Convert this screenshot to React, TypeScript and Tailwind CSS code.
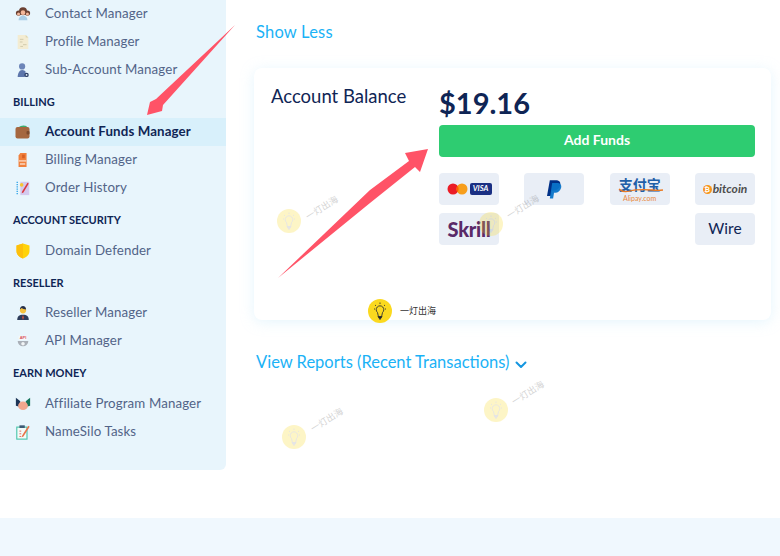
import React from "react";

function ContactIcon() {
  return (
    <svg width="16" height="16" viewBox="0 0 18 18">
      <circle cx="4" cy="8" r="3" fill="#6b4032" />
      <circle cx="14" cy="8" r="3" fill="#6b4032" />
      <circle cx="9" cy="6" r="4.500" fill="#6b4032" />
      <circle cx="9" cy="7.500" r="2.600" fill="#f3b79a" />
      <circle cx="4" cy="9" r="1.700" fill="#f3b79a" />
      <circle cx="14" cy="9" r="1.700" fill="#f3b79a" />
      <path d="M4 16c0-3 2-5 5-5s5 2 5 5z" fill="#a9cde6" />
    </svg>
  );
}
function ProfileIcon() {
  return (
    <svg width="16" height="16" viewBox="0 0 18 18">
      <path d="M3 1h9l3 3v13H3z" fill="#f3ecd2" />
      <path d="M12 1l3 3h-3z" fill="#ddd5b0" />
      <path d="M5.500 6h4M5.500 9h3M9 12h4M6 14h3" stroke="#cfc8a8" strokeWidth="1" />
    </svg>
  );
}
function SubIcon() {
  return (
    <svg width="16" height="16" viewBox="0 0 18 18">
      <circle cx="8" cy="5" r="3.500" fill="#6c85b8" />
      <path d="M3 17c0-4 2-8 5-8 2 0 3 1 4 2l-1 6z" fill="#5d76ab" />
      <circle cx="13" cy="14.500" r="2.500" fill="#2c3e66" />
      <circle cx="13" cy="14.500" r="1" fill="#e8f5fc" />
    </svg>
  );
}
function WalletIcon() {
  return (
    <svg width="15" height="14" viewBox="0 0 15 14">
      <path d="M3 2.500Q7 -.5 11.500 1L12 3H3z" fill="#3cae6f" />
      <rect x="0.500" y="2" width="14" height="11.500" rx="2" fill="#a5673f" />
      <rect x="11.500" y="6" width="3" height="3.500" rx="1" fill="#7b4a2c" />
    </svg>
  );
}
function BillingIcon() {
  return (
    <svg width="16" height="16" viewBox="0 0 18 18">
      <path d="M4 4l2-3h7v16H4z" fill="#f0803c" />
      <path d="M8 3h3v4H8z" fill="#d95e22" />
      <path d="M4 9h9v2H4z" fill="#f9c2a0" />
      <path d="M5.500 13.500h6" stroke="#fbe2d2" strokeWidth="1.500" />
    </svg>
  );
}
function OrderIcon() {
  return (
    <svg width="16" height="16" viewBox="0 0 18 18">
      <rect x="6" y="2" width="10" height="15" fill="#d3c9ee" />
      <path d="M2.500 2v15" stroke="#2ea3e8" strokeWidth="1.500" strokeDasharray="1.500 1" />
      <circle cx="7.500" cy="5.500" r="2" fill="#f7c531" />
      <path d="M8 13l6-10 1.500 1-6 10-2 1z" fill="#d9363e" />
    </svg>
  );
}
function ShieldIcon() {
  return (
    <svg width="16" height="16" viewBox="0 0 16 16">
      <path d="M8 0.500l6.500 2v5.500c0 3.500-3 6.500-6.500 7.500-3.500-1-6.500-4-6.500-7.500V2.500z" fill="#ffd30a" />
      <path d="M8 0.500L1.500 2.500v5.500c0 3.500 3 6.500 6.500 7.500z" fill="#fdbf0c" />
    </svg>
  );
}
function ResellerIcon() {
  return (
    <svg width="16" height="16" viewBox="0 0 18 18">
      <path d="M2.500 17c0-4 2-6 6.500-6s6.500 2 6.500 6z" fill="#2d3c5a" />
      <circle cx="9" cy="6" r="3.500" fill="#f6c23e" />
      <path d="M5.500 5c0-3 2-4 3.500-4s3.500 1 3.500 4c-2 0-4-.5-5-1.500z" fill="#26304a" />
      <path d="M9 11l-1 3 1 3 1-3z" fill="#d2533f" />
    </svg>
  );
}
function ApiIcon() {
  return (
    <svg width="16" height="16" viewBox="0 0 18 18">
      <path d="M3 9a6 6 0 0 0 12 0z" fill="#aab0b8" />
      <circle cx="9" cy="12" r="2" fill="#f1f4f6" />
      <rect x="4" y="3" width="10" height="5" rx="1" fill="#f5f7f9" />
      <text x="9" y="7.300" textAnchor="middle" fontSize="4.500" fontWeight="700" fill="#d8525f" fontFamily="Liberation Sans, sans-serif">API</text>
    </svg>
  );
}
function AffiliateIcon() {
  return (
    <svg width="16" height="16" viewBox="0 0 18 18">
      <path d="M1 2l5 4-1 6-4-1z" fill="#1d3557" />
      <path d="M17 2l-5 4 1 6 4-1z" fill="#15735a" />
      <ellipse cx="9" cy="11" rx="5.500" ry="4.800" fill="#f2a78e" />
    </svg>
  );
}
function TasksIcon() {
  return (
    <svg width="16" height="16" viewBox="0 0 18 18">
      <rect x="2" y="3.500" width="11.500" height="13.500" fill="#f3fbf8" stroke="#4fc6ad" strokeWidth="1.300" />
      <rect x="5" y="1.500" width="6" height="3" fill="#3d5a75" />
      <path d="M5 8h2M5 11h2M5 14h2" stroke="#e2574c" strokeWidth="1" />
      <path d="M8 13l7-11 1.500 1-7 11-2 .8z" fill="#e8744a" />
    </svg>
  );
}

function NavItem({ icon, label, active }: { icon: React.ReactNode; label: string; active?: boolean }) {
  return (
    <div className={`flex h-7 items-center ${active ? "bg-[#d8f0fb]" : ""}`}>
      <div className="flex w-[45px] shrink-0 items-center pl-[15px]">{icon}</div>
      <span className={`text-[13.300px] tracking-[0.12px] ${active ? "font-bold text-[#0f2555]" : "text-[#526488]"}`}>{label}</span>
    </div>
  );
}

function SectionTitle({ children, className }: { children: React.ReactNode; className: string }) {
  return <div className={`pt-[11px] pl-[13px] text-[11px] leading-[14px] font-bold text-[#0f2555] ${className}`}>{children}</div>;
}

function Bulb({ small }: { small?: boolean }) {
  return (
    <svg width="14" height="18" viewBox="0 0 14 18" fill="none" stroke={small ? "#333" : "#999"} strokeWidth="0.900">
      <path d="M4.500 10.500a3.800 3.800 0 1 1 5 0L8.500 15h-3z" />
      <path d="M7 17.500l-2-3h4z" fill={small ? "#222" : "#999"} />
      <path d="M7 .5v1.500M2 3l1 .8M12 3l-1 .8M1 7h1M12 7h1" />
    </svg>
  );
}

function Watermark({ x, y, tx, ty }: { x: number; y: number; tx: number; ty: number }) {
  return (
    <div className="pointer-events-none absolute inset-0 opacity-25">
      <div className="absolute flex size-6 items-center justify-center rounded-full bg-[#fbd91f]" style={{ left: x - 12, top: y - 12 }}>
        <Bulb />
      </div>
      <div className="absolute w-10 -rotate-[32deg] text-center text-[9px] leading-3 text-[#555]" style={{ left: tx - 20, top: ty - 6, fontFamily: '"Noto Sans CJK SC", sans-serif' }}>一灯出海</div>
    </div>
  );
}

function PayCell({ children, className = "" }: { children: React.ReactNode; className?: string }) {
  return <div className={`flex h-8 w-[60px] items-center justify-center rounded bg-[#e9eef6] ${className}`}>{children}</div>;
}

export default function App() {
  return (
    <div className="relative h-[556px] w-[780px] overflow-hidden bg-white font-['Lato',sans-serif]">
      <div className="flex h-[518px] items-start">
        <aside className="h-[470px] w-[226px] shrink-0 rounded-br-md bg-[#e8f5fc]">
          <NavItem icon={<ContactIcon />} label="Contact Manager" />
          <NavItem icon={<ProfileIcon />} label="Profile Manager" />
          <NavItem icon={<SubIcon />} label="Sub-Account Manager" />
          <SectionTitle className="pb-[9px]">BILLING</SectionTitle>
          <NavItem active icon={<WalletIcon />} label="Account Funds Manager" />
          <NavItem icon={<BillingIcon />} label="Billing Manager" />
          <NavItem icon={<OrderIcon />} label="Order History" />
          <SectionTitle className="pb-[10px]">ACCOUNT SECURITY</SectionTitle>
          <NavItem icon={<ShieldIcon />} label="Domain Defender" />
          <SectionTitle className="pb-[9px]">RESELLER</SectionTitle>
          <NavItem icon={<ResellerIcon />} label="Reseller Manager" />
          <NavItem icon={<ApiIcon />} label="API Manager" />
          <SectionTitle className="pb-[10px]">EARN MONEY</SectionTitle>
          <NavItem icon={<AffiliateIcon />} label="Affiliate Program Manager" />
          <NavItem icon={<TasksIcon />} label="NameSilo Tasks" />
        </aside>
        <main className="min-w-0 flex-1 pt-[21px] pr-[9px] pl-[30px]">
          <div className="text-[16.500px] leading-[22px] tracking-[0.2px] text-[#1ab2f6]">Show Less</div>
          <section className="mt-[25px] -ml-[2px] flex h-[252px] rounded-lg bg-white pt-4 pr-4 pl-[17px] shadow-[0_2px_14px_rgba(180,225,250,0.35)]">
            <div className="mt-px w-[168px] shrink-0 text-[18.500px] leading-[22px] text-[#0f2555]">Account Balance</div>
            <div className="min-w-0 flex-1">
              <div className="text-[29px] leading-[38px] font-bold text-[#0f2555]">$19.16</div>
              <button className="mt-[3px] flex h-8 w-full items-center justify-center rounded bg-[#2ecc71] pb-[3px] text-[14px] font-bold text-white">Add Funds</button>
              <div className="mt-4 grid grid-cols-[60px_60px_60px_60px] justify-between gap-y-2">
                <PayCell>
                  <div className="flex items-center gap-[2px]">
                    <svg width="21" height="12" viewBox="0 0 21 12">
                      <circle cx="6" cy="6" r="5.500" fill="#eb1c26" />
                      <circle cx="15" cy="6" r="5.500" fill="#f79e1b" />
                      <path d="M10.500 2.800a5.500 5.500 0 0 1 0 6.400 5.500 5.500 0 0 1 0-6.400z" fill="#ff5f00" />
                    </svg>
                    <div className="flex h-3 w-[22px] items-center justify-center rounded-[2px] bg-[#1a2f83] text-[7.500px] leading-none font-bold text-white italic">VISA</div>
                  </div>
                </PayCell>
                <PayCell>
                  <svg width="15" height="19" viewBox="0 0 16 20">
                    <path d="M3 0h6c4 0 6 2 5 5.500C13 9.500 10 11 7 11H5l-1 6H0z" fill="#003087" />
                    <path d="M5.500 3h5c3.500 0 5.500 2 4.500 5.500C14 12 11.500 13.500 9 13.500H7.500l-1 6H3z" fill="#0a74c9" opacity="0.95" />
                  </svg>
                </PayCell>
                <PayCell>
                  <div className="relative flex flex-col items-center leading-none">
                    <span className="text-[14px] leading-[15px] font-bold text-[#1f5fa8]" style={{ fontFamily: '"Noto Sans CJK SC", sans-serif' }}>支付宝</span>
                    <svg className="absolute top-[9px] -left-px" width="46" height="7" viewBox="0 0 46 7" fill="none" stroke="#ea7b24" strokeWidth="1.300">
                      <path d="M1 3q4 4 11 2t22-1q6 .8 11 0" />
                    </svg>
                    <span className="mt-[2px] text-[7px] leading-[8px] text-[#ea8a3a]">Alipay.com</span>
                  </div>
                </PayCell>
                <PayCell>
                  <div className="flex items-center">
                    <div className="mr-px flex size-[9px] items-center justify-center rounded-full bg-[#f7931a] text-[7px] leading-none font-bold text-white">₿</div>
                    <span className="text-[12px] leading-none font-bold text-[#4d4d4d] italic">bitcoin</span>
                  </div>
                </PayCell>
                <PayCell>
                  <span className="text-[20px] leading-none font-black tracking-[-0.3px] text-[#5a2a68]">Skrill</span>
                </PayCell>
                <PayCell className="col-start-4">
                  <span className="text-[15.500px] text-[#0f2555]">Wire</span>
                </PayCell>
              </div>
            </div>
          </section>
          <div className="mt-[31px] flex items-center gap-[6px] text-[16.500px] leading-[22px] text-[#1ab2f6]">
            View Reports (Recent Transactions)
            <svg width="12" height="8" viewBox="0 0 12 8" className="mt-[5px]" fill="none" stroke="#1596e0" strokeWidth="2" strokeLinecap="round" strokeLinejoin="round">
              <path d="M1.500 1.500L6 6l4.500-4.500" />
            </svg>
          </div>
        </main>
      </div>
      <footer className="h-[38px] bg-[#f0f8fe]" />

      {/* annotation arrows drawn over the screenshot */}
      <svg className="pointer-events-none absolute inset-0" width="780" height="556" viewBox="0 0 780 556">
        <polygon points="235,25 163,105 162,111 147,115 150,102 156,99" fill="#ff5367" />
        <polygon points="278,278 370,190 409,161 405,153 428,149 420,172 415,167 370,203" fill="#ff5367" />
      </svg>

      <Watermark x={289} y={221} tx={322} ty={208} />
      <Watermark x={491} y={224} tx={523} ty={207} />
      <Watermark x={294} y={437} tx={327} ty={420} />
      <Watermark x={496} y={410} tx={528} ty={393} />
      <div className="absolute top-[299px] left-[368px] flex items-center gap-2">
        <div className="flex size-6 items-center justify-center rounded-full bg-[#fbd91f]"><Bulb small /></div>
        <span className="text-[9px] leading-3 text-[#333]" style={{ fontFamily: '"Noto Sans CJK SC", sans-serif' }}>一灯出海</span>
      </div>
    </div>
  );
}
